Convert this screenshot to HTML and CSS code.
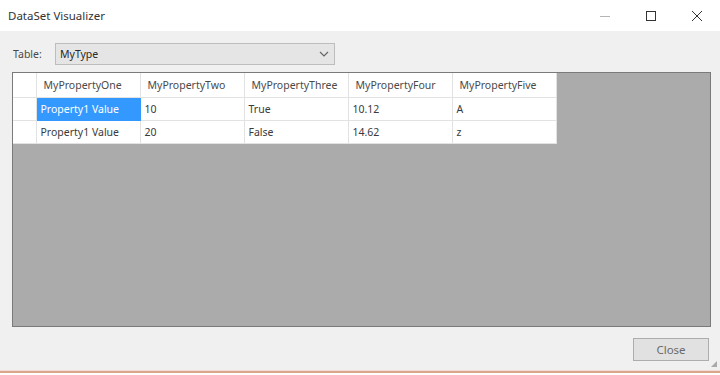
FILE: index.html
```html
<!DOCTYPE html>
<html lang="en">
<head>
    <meta charset="UTF-8">
    <title>DataSet Visualizer</title>
    <link rel="stylesheet" href="styles.css">
</head>
<body>
    <div class="window">
        <div class="titlebar">
            <span class="title">DataSet Visualizer</span>
            <div class="controls">
                <span class="ctl">
                    <svg width="12" height="12" viewBox="0 0 12 12"><path d="M1 6.5h10" stroke="#b5b5b5" stroke-width="1"/></svg>
                </span>
                <span class="ctl">
                    <svg width="12" height="12" viewBox="0 0 12 12"><rect x="1.5" y="1.5" width="9" height="9" fill="none" stroke="#333" stroke-width="1"/></svg>
                </span>
                <span class="ctl">
                    <svg width="12" height="12" viewBox="0 0 12 12"><path d="M1 1l10 10M11 1L1 11" stroke="#333" stroke-width="1"/></svg>
                </span>
            </div>
        </div>

        <div class="content">
            <div class="picker">
                <label class="picker-label">Table:</label>
                <div class="combo">
                    <span>MyType</span>
                    <svg width="10" height="6" viewBox="0 0 10 6"><path d="M1 1l4 4 4-4" fill="none" stroke="#666" stroke-width="1.2"/></svg>
                </div>
            </div>

            <div class="grid-view">
                <table class="grid">
                    <thead>
                        <tr>
                            <th class="row-head"></th>
                            <th>MyPropertyOne</th>
                            <th>MyPropertyTwo</th>
                            <th>MyPropertyThree</th>
                            <th>MyPropertyFour</th>
                            <th>MyPropertyFive</th>
                        </tr>
                    </thead>
                    <tbody>
                        <tr>
                            <td class="row-head"></td>
                            <td class="selected">Property1 Value</td>
                            <td>10</td>
                            <td>True</td>
                            <td>10.12</td>
                            <td>A</td>
                        </tr>
                        <tr>
                            <td class="row-head"></td>
                            <td>Property1 Value</td>
                            <td>20</td>
                            <td>False</td>
                            <td>14.62</td>
                            <td>z</td>
                        </tr>
                    </tbody>
                </table>
            </div>

            <div class="footer">
                <button class="close-btn">Close</button>
            </div>
            <span class="grip"></span>
        </div>
    </div>
</body>
</html>
```

FILE: styles.css
```css
* {
    margin: 0;
    padding: 0;
    box-sizing: border-box;
}

body {
    font-family: "Noto Sans", "Open Sans", sans-serif;
    font-size: 10.5px;
    color: #3a3a3a;
    background: #ffffff;
    width: 720px;
    height: 375px;
    overflow: hidden;
}

.window {
    width: 720px;
    height: 373px;
    display: flex;
    flex-direction: column;
    border-bottom: 2px solid #d9a58d;
}

.titlebar {
    height: 31px;
    background: #ffffff;
    display: flex;
    align-items: center;
    justify-content: space-between;
    padding-left: 8px;
}

.title {
    font-size: 11.5px;
    color: #333;
    margin-top: -1px;
}

.controls {
    display: flex;
    height: 100%;
}

.ctl {
    width: 46px;
    display: flex;
    align-items: center;
    justify-content: center;
}

.content {
    flex: 1;
    background: #f0f0f0;
    padding: 12px 9px 0 12px;
    display: flex;
    flex-direction: column;
    position: relative;
    border-bottom: 1px solid #f3dcd2;
}

.picker {
    display: flex;
    align-items: center;
    height: 22px;
}

.picker-label {
    width: 43px;
    padding-left: 1px;
    color: #4a4a4a;
}

.combo {
    width: 280px;
    height: 22px;
    background: #e5e5e5;
    border: 1px solid #bdbdbd;
    display: flex;
    align-items: center;
    justify-content: space-between;
    padding: 0 5px 0 4px;
    color: #2a2a2a;
}

.grid-view {
    margin-top: 7px;
    height: 255px;
    background: #ababab;
    border: 1px solid #7a7a7a;
}

.grid {
    border-collapse: collapse;
    background: #ffffff;
}

.grid th,
.grid td {
    width: 104px;
    height: 23px;
    border: 1px solid #e2e2e2;
    text-align: left;
    font-weight: normal;
    white-space: nowrap;
}

.grid th {
    height: 24px;
    padding-left: 7px;
    color: #4a4a4a;
}

.grid td {
    padding-left: 4px;
}

.grid .row-head {
    width: 23px;
    padding: 0;
}

.grid tr > :first-child {
    border-left: none;
}

.grid thead th {
    border-top: none;
}

.grid td.selected {
    background: #3399ff;
    color: #ffffff;
    border-color: #3399ff;
}

.footer {
    display: flex;
    justify-content: flex-end;
    padding-top: 11px;
}

.close-btn {
    width: 76px;
    height: 23px;
    font-family: inherit;
    font-size: 11.5px;
    color: #6a6a6a;
    background: #e1e1e1;
    border: 1px solid #adadad;
    margin-right: 2px;
}

.grip {
    position: absolute;
    right: 3px;
    bottom: 3px;
    width: 6px;
    height: 6px;
    background: radial-gradient(circle, #a9a9a9 0.8px, transparent 1px) 0 0 / 2px 2px;
    clip-path: polygon(100% 0, 100% 100%, 0 100%);
}
```
